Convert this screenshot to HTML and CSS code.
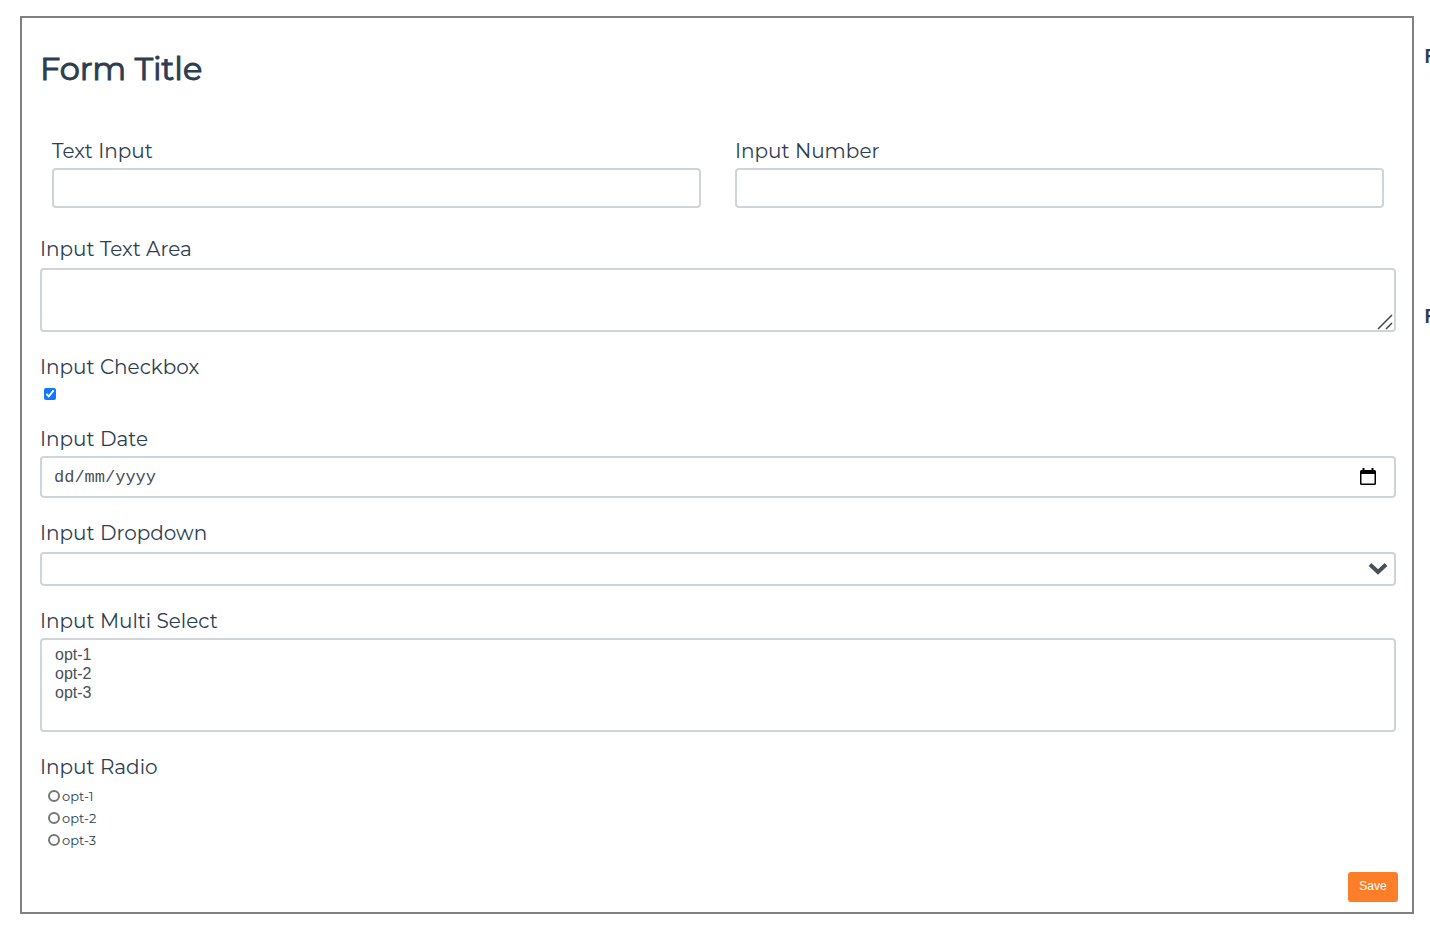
FILE: index.html
```html
<!DOCTYPE html>
<html lang="en">
<head>
<meta charset="utf-8">
<title>Form Title</title>
<link rel="stylesheet" href="styles.css">
</head>
<body>
<div class="page">
  <form class="panel">
    <h1 class="title">Form Title</h1>
    <div class="row">
      <div class="cell">
        <label class="label" for="text">Text Input</label>
        <input class="control" id="text" type="text">
      </div>
      <div class="cell">
        <label class="label" for="number">Input Number</label>
        <input class="control" id="number" type="number">
      </div>
    </div>
    <div class="field">
      <label class="label label-spaced" for="area">Input Text Area</label>
      <div class="wrap">
        <textarea class="control area" id="area"></textarea>
        <svg class="grip" viewBox="0 0 16 16" aria-hidden="true"><path d="M1 15 15 1M9 15l6-6"/></svg>
      </div>
    </div>
    <div class="field">
      <label class="label" for="check">Input Checkbox</label>
      <div class="check-line"><input class="check" id="check" type="checkbox" checked></div>
    </div>
    <div class="field">
      <label class="label" for="date">Input Date</label>
      <div class="wrap">
        <input class="control date" id="date" type="text" placeholder="dd/mm/yyyy">
        <button class="calendar" type="button" aria-label="Open calendar">
          <svg viewBox="0 0 16 18" aria-hidden="true"><path fill-rule="evenodd" d="M2.500 0h2v2h7V0h2v2h1Q16 2 16 3.500v12Q16 17 14.500 17h-13Q0 17 0 15.500v-12Q0 2 1.500 2h1zM1.500 6v9.500h13V6z"/></svg>
        </button>
      </div>
    </div>
    <div class="field">
      <label class="label label-spaced" for="drop">Input Dropdown</label>
      <div class="wrap">
        <select class="control drop" id="drop"><option></option></select>
        <svg class="chevron" viewBox="0 0 20 14" aria-hidden="true"><path d="m2 2.500 8 7.500 8-7.500"/></svg>
      </div>
    </div>
    <div class="field">
      <label class="label" for="multi">Input Multi Select</label>
      <select class="control multi" id="multi" multiple>
        <option>opt-1</option>
        <option>opt-2</option>
        <option>opt-3</option>
      </select>
    </div>
    <fieldset class="field group">
      <legend class="label">Input Radio</legend>
      <label class="choice"><input class="radio" type="radio" name="choice">opt-1</label>
      <label class="choice"><input class="radio" type="radio" name="choice">opt-2</label>
      <label class="choice"><input class="radio" type="radio" name="choice">opt-3</label>
    </fieldset>
    <div class="actions"><button class="save" type="button">Save</button></div>
  </form>
  <aside class="side">
    <h2 class="side-title">F</h2>
    <h2 class="side-title">F</h2>
  </aside>
</div>
</body>
</html>
```
FILE: styles.css
```css
* { box-sizing: border-box; }
body {
  margin: 0;
  background: #fff;
  color: #2c3e50;
  font-family: Montserrat, Inter, sans-serif;
}
.page {
  display: grid;
  grid-template-columns: minmax(0, 1fr) 6px;
  gap: 10px;
  padding: 16px 0 24px 20px;
}
.panel {
  border: 2px solid #808080;
  padding: 31px 14px 10px 18px;
}
.title {
  margin: 0 0 49px;
  font-size: 32px;
  font-weight: 400;
  line-height: 40px;
  -webkit-text-stroke: 1px currentColor;
}
.row {
  display: grid;
  grid-template-columns: 1fr 1fr;
  gap: 34px;
  padding: 0 14px 6px 12px;
}
.field { margin: 22px 2px 0 0; }
.label {
  display: block;
  margin-bottom: 4px;
  padding: 0;
  font-size: 20px;
  font-weight: 400;
  line-height: 26px;
}
.label-spaced { margin-bottom: 6px; }
.control {
  display: block;
  width: 100%;
  height: 40px;
  margin: 0;
  padding: 4px 12px;
  border: 2px solid #ced4da;
  border-radius: 4px;
  background: #fff;
  color: #495057;
  font: 16px/20px "Liberation Sans", sans-serif;
  outline: 0;
}
.wrap { position: relative; }
.area { height: 64px; resize: none; }
.grip {
  position: absolute;
  right: 3px;
  bottom: 2px;
  width: 16px;
  height: 16px;
  fill: none;
  stroke: #444;
  stroke-width: 1.5;
}
.check-line { padding: 4px; }
.check, .radio {
  display: block;
  width: 12px;
  height: 12px;
  margin: 0;
}
.check { accent-color: #0d7aff; }
.date {
  height: 42px;
  font-family: Courier, "Liberation Mono", monospace;
  font-size: 17px;
}
.date::placeholder { color: #495057; }
.calendar {
  position: absolute;
  top: 12px;
  right: 20px;
  width: 16px;
  height: 18px;
  padding: 0;
  border: 0;
  background: none;
}
.calendar svg { display: block; }
.drop { height: 34px; appearance: none; }
.chevron {
  position: absolute;
  top: 10px;
  right: 8px;
  width: 20px;
  height: 14px;
  fill: none;
  stroke: #495057;
  stroke-width: 4;
  pointer-events: none;
}
.multi { height: 94px; padding: 6px 11px; }
.multi option { min-height: 19px; line-height: 19px; padding: 0 2px; }
.group {
  min-width: 0;
  padding: 0 0 21px;
  border: 0;
}
.group .label { margin-bottom: 5px; }
.choice {
  display: flex;
  align-items: center;
  gap: 2px;
  height: 22px;
  padding-left: 8px;
  font-size: 13px;
}
.radio {
  appearance: none;
  border: 2px solid #767676;
  border-radius: 50%;
}
.radio:checked { background: #0d7aff; }
.actions { display: flex; justify-content: flex-end; }
.save {
  width: 50px;
  height: 30px;
  padding: 0 0 2px;
  border: 0;
  border-radius: 3px;
  background: #fd7e28;
  color: #fff;
  font: 12px "Liberation Sans", sans-serif;
}
.side { overflow: hidden; padding-top: 27px; }
.side-title {
  margin: 0 0 234px;
  font-size: 20px;
  font-weight: 600;
  line-height: 26px;
}
```
